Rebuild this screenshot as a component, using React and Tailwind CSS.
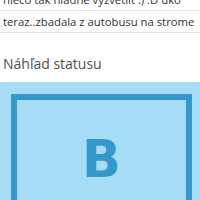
export default function App() {
  return (
    <div className="w-[200px] h-[200px] overflow-hidden bg-white font-['Open_Sans',sans-serif]">
      <div className="-mt-[11px]">
        <div className="h-[22px] border-b border-[#e2e2e2] px-[3px] text-[11.3px] leading-[21px] text-[#333] whitespace-nowrap">niečo tak hladne vyzvetliť :) :D uko</div>
        <div className="h-[22px] border-b border-[#e2e2e2] px-[3px] text-[11.3px] leading-[21px] text-[#333] whitespace-nowrap">teraz..zbadala z autobusu na strome</div>
      </div>
      <div className="pt-[21px] pb-[8px] px-[3px] text-[14px] leading-[20px] text-[#505050]">Náhľad statusu</div>
      <div className="bg-[#a6dcf6] pt-[12px] h-[200px]">
        <div className="ml-[11px] w-[181px] border-[6px] border-[#3498cc] h-[200px] flex justify-center pt-[34px]">
          <span className="font-['DejaVu_Sans',sans-serif] text-[51px] font-bold leading-[51px] text-[#3498cc]">B</span>
        </div>
      </div>
    </div>
  );
}
